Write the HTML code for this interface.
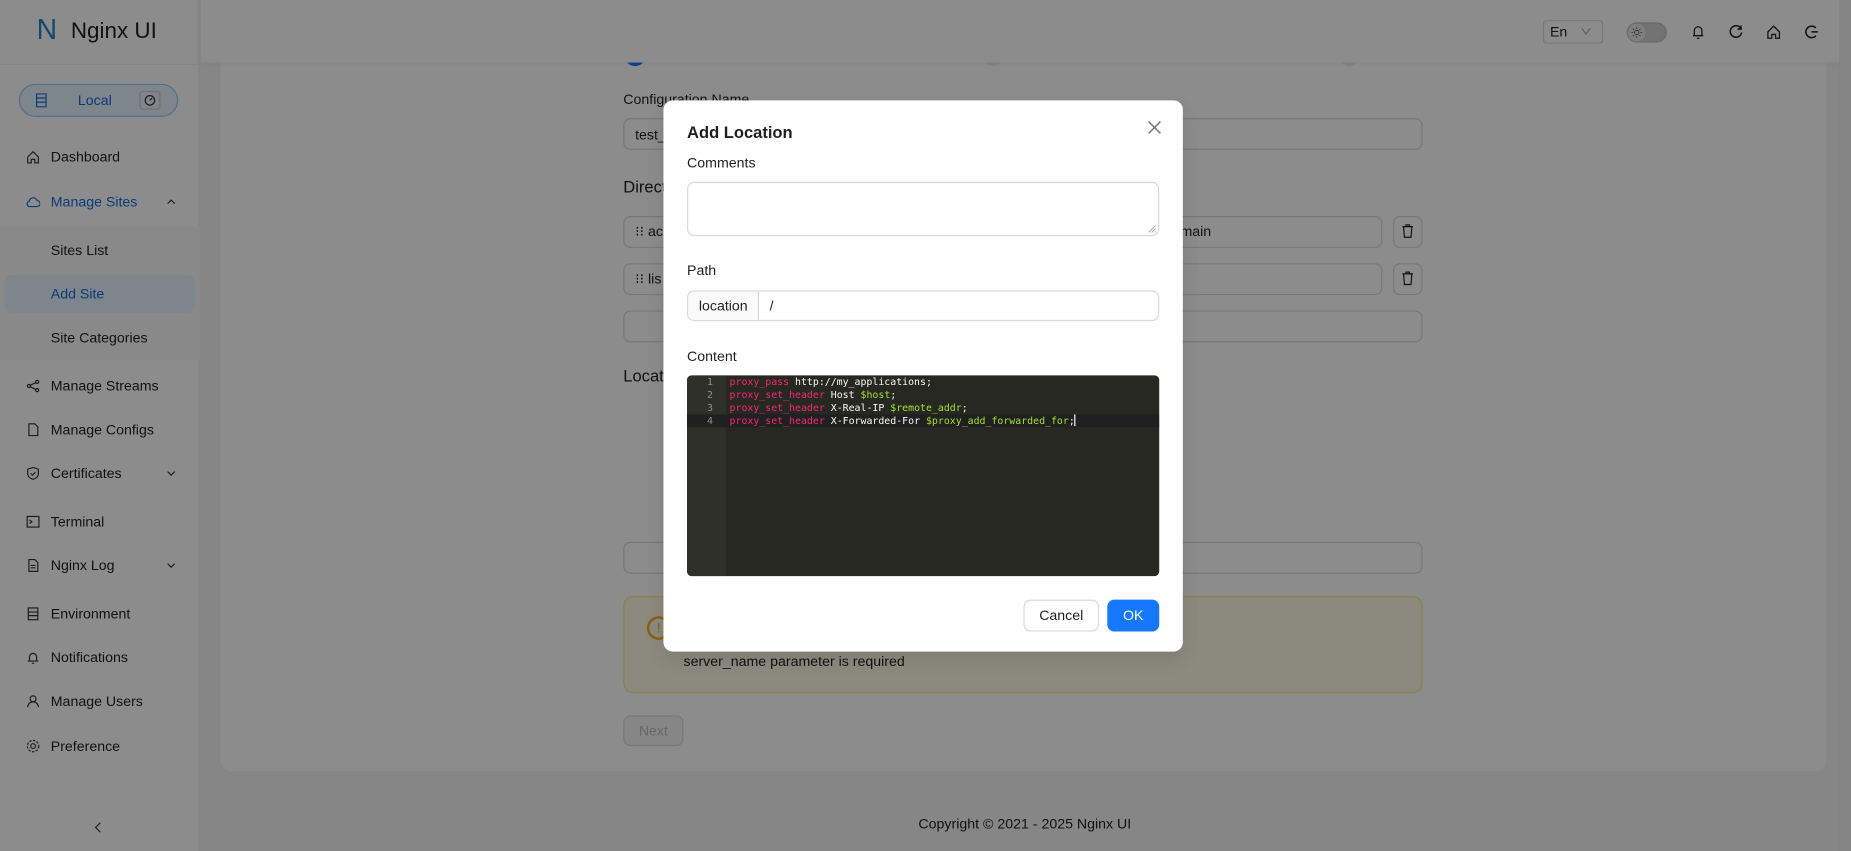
<!DOCTYPE html>
<html><head><meta charset="utf-8">
<style>
*{box-sizing:border-box;margin:0;padding:0}
html,body{width:1851px;height:851px;overflow:hidden;font-family:"Liberation Sans",sans-serif;}
#w{position:absolute;left:0;top:0;width:1568px;height:721px;transform:scale(1.18048);transform-origin:0 0;background:#f5f5f5;font-size:12px;color:rgba(0,0,0,.88)}
.a{position:absolute}
.sb{left:0;top:0;width:169px;height:721px;background:#fff;border-right:1px solid #eee}
.mi{position:absolute;left:43px;font-size:12px;color:#222;transform:translateY(-50%)}
.ic{position:absolute;left:22px;width:12px;height:12px;transform:translateY(-50%)}
.inp{position:absolute;border:1px solid #d9d9d9;border-radius:6px;background:#fff}
.lbl{position:absolute;font-size:12px;transform:translateY(-50%)}
.code{position:absolute;left:36px;font-family:"DejaVu Sans Mono","Liberation Mono",monospace;font-size:8.4px;color:#f8f8f2;white-space:pre;line-height:11px}
.k{color:#f92672}.v{color:#a6e22e}
.ln{position:absolute;left:0;width:22px;text-align:right;font-family:"DejaVu Sans Mono",monospace;font-size:8.4px;color:#8f908a;line-height:11px}
</style></head><body>
<div id="w">
<!-- card -->
<div class="a" style="left:187px;top:53px;width:1360px;height:600px;background:#fff;border-radius:0 0 8px 8px"></div>
<div class="a" style="left:529px;top:38px;width:18px;height:18px;border-radius:9px;background:#1677ff"></div>
<div class="a" style="left:832px;top:38px;width:18px;height:18px;border-radius:9px;background:#eee"></div>
<div class="a" style="left:1134px;top:38px;width:18px;height:18px;border-radius:9px;background:#eee"></div>
<!-- sidebar -->
<div class="a sb">
 <div class="a" style="left:31px;top:12px;font-size:24px;color:#1e88c8;font-weight:300">N</div>
 <div class="a" style="left:60px;top:16px;font-size:19px;color:#222">Nginx UI</div>
 <div class="a" style="left:0;top:54px;width:169px;height:1px;background:#eee"></div>
 <div class="a" style="left:16px;top:71px;width:135px;height:28px;border:1px solid #91caff;border-radius:14px;background:#e6f4ff"></div>
 <svg class="a" style="left:30px;top:79px" width="10" height="12" viewBox="0 0 10 12" fill="none" stroke="#1668dc"><rect x="1" y=".5" width="8" height="11"/><path d="M1 4h8M1 7.5h8"/></svg>
 <div class="a" style="left:66px;top:78px;color:#1668dc;font-size:12px">Local</div>
 <div class="a" style="left:118px;top:77px;width:18px;height:16px;border:1px solid #ccc;border-radius:3px;background:#eef"></div>
 <svg class="a" style="left:122px;top:80px" width="10" height="10" viewBox="0 0 10 10" fill="none" stroke="#333"><circle cx="5" cy="5" r="4"/><path d="M5 5l2-2"/></svg>
 <div class="a" style="left:0;top:192px;width:169px;height:113px;background:#fafafa"></div>
 <div class="a" style="left:4px;top:233px;width:161px;height:32px;background:#e6f4ff;border-radius:6px"></div>
 <svg class="ic" style="top:133px" viewBox="0 0 12 12" fill="none" stroke="#333"><path d="M1.5 6L6 1.5 10.5 6v5h-3V8h-3v3h-3z"/></svg>
 <div class="mi" style="top:133px">Dashboard</div>
 <svg class="ic" style="top:171px" viewBox="0 0 12 12" fill="none" stroke="#1668dc"><path d="M3 10h6.5a2.5 2.5 0 0 0 0-5 3.5 3.5 0 0 0-6.8.5A2.3 2.3 0 0 0 3 10z"/></svg>
 <div class="mi" style="top:171px;color:#1668dc">Manage Sites</div>
 <svg class="a" style="left:141px;top:168px" width="8" height="5" viewBox="0 0 8 5" fill="none" stroke="#333"><path d="M1 4.5L4 1.5 7 4.5"/></svg>
 <div class="mi" style="top:212px">Sites List</div>
 <div class="mi" style="top:249px;color:#1668dc">Add Site</div>
 <div class="mi" style="top:286px">Site Categories</div>
 <svg class="ic" style="top:327px" viewBox="0 0 12 12" fill="none" stroke="#333"><circle cx="2.5" cy="6" r="1.3"/><circle cx="9.5" cy="2.5" r="1.3"/><circle cx="9.5" cy="9.5" r="1.3"/><path d="M3.7 5.3l4.6-2.2M3.7 6.7l4.6 2.2"/></svg>
 <div class="mi" style="top:327px">Manage Streams</div>
 <svg class="ic" style="top:364px" viewBox="0 0 12 12" fill="none" stroke="#333"><path d="M2.5 1h5l2.5 2.5V11h-7.5z"/></svg>
 <div class="mi" style="top:364px">Manage Configs</div>
 <svg class="ic" style="top:401px" viewBox="0 0 12 12" fill="none" stroke="#333"><path d="M6 1l4.5 1.5v3.5C10.5 9 8 10.5 6 11 4 10.5 1.5 9 1.5 6V2.5z"/><path d="M4 6l1.5 1.5L8 5"/></svg>
 <div class="mi" style="top:401px">Certificates</div>
 <svg class="a" style="left:141px;top:399px" width="8" height="5" viewBox="0 0 8 5" fill="none" stroke="#333"><path d="M1 .5L4 3.5 7 .5"/></svg>
 <svg class="ic" style="top:442px" viewBox="0 0 12 12" fill="none" stroke="#333"><rect x="1" y="1.5" width="10" height="9"/><path d="M3 4.5l2 1.5-2 1.5"/></svg>
 <div class="mi" style="top:442px">Terminal</div>
 <svg class="ic" style="top:479px" viewBox="0 0 12 12" fill="none" stroke="#333"><path d="M2.5 1h5l2.5 2.5V11h-7.5z"/><path d="M4 6h4M4 8h4"/></svg>
 <div class="mi" style="top:479px">Nginx Log</div>
 <svg class="a" style="left:141px;top:477px" width="8" height="5" viewBox="0 0 8 5" fill="none" stroke="#333"><path d="M1 .5L4 3.5 7 .5"/></svg>
 <svg class="ic" style="top:520px" viewBox="0 0 12 12" fill="none" stroke="#333"><rect x="2" y="1" width="8" height="10"/><path d="M2 4.5h8M2 7.5h8"/></svg>
 <div class="mi" style="top:520px">Environment</div>
 <svg class="ic" style="top:557px" viewBox="0 0 12 12" fill="none" stroke="#333"><path d="M3 9V5.5a3 3 0 0 1 6 0V9h1.5H1.5zM5 10.8h2"/></svg>
 <div class="mi" style="top:557px">Notifications</div>
 <svg class="ic" style="top:594px" viewBox="0 0 12 12" fill="none" stroke="#333"><circle cx="6" cy="4" r="2.5"/><path d="M1.5 11a4.5 4.5 0 0 1 9 0"/></svg>
 <div class="mi" style="top:594px">Manage Users</div>
 <svg class="ic" style="top:632px" viewBox="0 0 12 12" fill="none" stroke="#333"><circle cx="6" cy="6" r="2"/><circle cx="6" cy="6" r="4.8" stroke-dasharray="2 1.2"/></svg>
 <div class="mi" style="top:632px">Preference</div>
 <svg class="a" style="left:80px;top:696px" width="6" height="10" viewBox="0 0 6 10" fill="none" stroke="#333"><path d="M5 1L1 5l4 4"/></svg>
</div>
<!-- header -->
<div class="a" style="left:170px;top:0;width:1398px;height:53px;background:#fff;box-shadow:0 1px 4px rgba(0,0,0,.06)"></div>
<div class="a" style="left:1307px;top:17px;width:51px;height:20px;border:1px solid #d9d9d9;border-radius:3px"></div>
<div class="a" style="left:1313px;top:20px;font-size:12px">En</div>
<svg class="a" style="left:1339px;top:23px" width="9" height="7" viewBox="0 0 9 7" fill="none" stroke="#aaa"><path d="M1 1l3.5 5L8 1"/></svg>
<div class="a" style="left:1378px;top:19px;width:34px;height:17px;border-radius:9px;background:#d0d0d0;border:1px solid #c0c0c0"></div>
<div class="a" style="left:1379px;top:20px;width:15px;height:15px;border-radius:8px;background:#e8e8e8"></div>
<svg class="a" style="left:1382px;top:23px" width="9" height="9" viewBox="0 0 10 10" fill="none" stroke="#555" stroke-width=".8"><circle cx="5" cy="5" r="2"/><path d="M5 0v1.5M5 8.5V10M0 5h1.5M8.5 5H10M1.5 1.5l1 1M7.5 7.5l1 1M1.5 8.5l1-1M7.5 2.5l1-1"/></svg>
<svg class="a" style="left:1432px;top:20px" width="13" height="14" viewBox="0 0 12 13" fill="none" stroke="#222"><path d="M3 9.5V5.5a3 3 0 0 1 6 0v4h1H2zM5 11.5h2"/></svg>
<svg class="a" style="left:1464px;top:20px" width="13" height="14" viewBox="0 0 12 12" fill="none" stroke="#222" stroke-width="1.2"><path d="M10 3.5A4.5 4.5 0 1 0 10.5 6.5"/><path d="M10 1v2.8H7.3"/></svg>
<svg class="a" style="left:1496px;top:20px" width="13" height="14" viewBox="0 0 12 12" fill="none" stroke="#222"><path d="M1.5 6L6 1.5 10.5 6v5h-3V8h-3v3h-3z"/></svg>
<svg class="a" style="left:1528px;top:20px" width="13" height="14" viewBox="0 0 12 12" fill="none" stroke="#222" stroke-width="1.2"><path d="M9.5 3A4.5 4.5 0 1 0 9.5 9"/><path d="M6 6h5"/></svg>
<div class="lbl" style="left:528px;top:84px">Configuration Name</div>
<div class="inp" style="left:528px;top:100px;width:677px;height:27px"></div>
<div class="lbl" style="left:538px;top:114px">test_</div>
<div class="lbl" style="left:528px;top:158px;font-size:14px">Directives</div>
<div class="inp" style="left:528px;top:183px;width:643px;height:27px"></div>
<div class="lbl" style="left:538px;top:196px">⁝⁝ ac</div>
<div class="lbl" style="left:1000px;top:196px">main</div>
<div class="inp" style="left:1180px;top:183px;width:25px;height:27px"></div>
<div class="inp" style="left:528px;top:223px;width:643px;height:27px"></div>
<div class="lbl" style="left:538px;top:236px">⁝⁝ lis</div>
<div class="inp" style="left:1180px;top:223px;width:25px;height:27px"></div>
<svg class="a" style="left:1187px;top:189px" width="11" height="13" viewBox="0 0 11 13" fill="none" stroke="#222"><path d="M1 3h9M4 3V1.5h3V3M2 3l.7 9h5.6L9 3"/></svg>
<svg class="a" style="left:1187px;top:229px" width="11" height="13" viewBox="0 0 11 13" fill="none" stroke="#222"><path d="M1 3h9M4 3V1.5h3V3M2 3l.7 9h5.6L9 3"/></svg>
<div class="inp" style="left:528px;top:263px;width:677px;height:27px"></div>
<div class="lbl" style="left:528px;top:318px;font-size:14px">Locations</div>
<div class="inp" style="left:528px;top:459px;width:677px;height:27px"></div>
<div class="a" style="left:528px;top:505px;width:677px;height:82px;background:#fffbe6;border:1px solid #ffe58f;border-radius:8px"></div>
<div class="a" style="left:548px;top:522px;width:20px;height:20px;border:2px solid #faad14;border-radius:10px;color:#faad14;font-size:12px;text-align:center;line-height:16px">!</div>
<div class="lbl" style="left:579px;top:560px">server_name parameter is required</div>
<div class="a" style="left:528px;top:606px;width:51px;height:26px;border:1px solid #d9d9d9;border-radius:6px;background:#f5f5f5;color:#bbb;text-align:center;line-height:24px">Next</div>
<div class="a" style="left:778px;top:691px;font-size:12px">Copyright © 2021 - 2025 Nginx UI</div>
<div class="a" style="left:1558px;top:0;width:10px;height:721px;background:#f0f0f0"></div>
<!-- overlay -->
<div class="a" style="left:0;top:0;width:1568px;height:721px;background:rgba(0,0,0,.45)"></div>
<!-- modal -->
<div class="a" style="left:562px;top:85px;width:440px;height:467px;background:#fff;border-radius:8px;box-shadow:0 6px 16px rgba(0,0,0,.1)">
 <div class="a" style="left:20px;top:19px;font-size:14px;font-weight:bold">Add Location</div>
 <svg class="a" style="left:410px;top:17px" width="12" height="12" viewBox="0 0 12 12" stroke="#777" stroke-width="1.3"><path d="M1 1l10 10M11 1L1 11"/></svg>
 <div class="lbl" style="left:20px;top:53px">Comments</div>
 <div class="inp" style="left:20px;top:69px;width:400px;height:46px"></div>
 <svg class="a" style="left:410px;top:105px" width="7" height="7" viewBox="0 0 7 7" stroke="#999" stroke-width=".7"><path d="M1 7L7 1M3.5 7L7 3.5M6 7L7 6"/></svg>
 <div class="lbl" style="left:20px;top:144px">Path</div>
 <div class="inp" style="left:20px;top:161px;width:400px;height:26px;overflow:hidden"><div class="a" style="left:0;top:0;width:60px;height:24px;background:#fafafa;border-right:1px solid #d9d9d9"></div></div>
 <div class="lbl" style="left:30px;top:174px">location</div>
 <div class="lbl" style="left:90px;top:174px">/</div>
 <div class="lbl" style="left:20px;top:217px">Content</div>
 <div class="a" style="left:20px;top:233px;width:400px;height:170px;background:#272822;border-radius:4px;overflow:hidden">
  <div class="a" style="left:0;top:0;width:33px;height:170px;background:#2f3129"></div>
  <div class="a" style="left:0;top:33px;width:400px;height:11px;background:#202020"></div>
  <div class="ln" style="top:0">1<br>2<br>3<br>4</div>
  <div class="code" style="top:0"><span class="k">proxy_pass</span> http://my_applications;
<span class="k">proxy_set_header</span> Host <span class="v">$host</span>;
<span class="k">proxy_set_header</span> X-Real-IP <span class="v">$remote_addr</span>;
<span class="k">proxy_set_header</span> X-Forwarded-For <span class="v">$proxy_add_forwarded_for</span>;<span style="border-left:1.5px solid #fff"></span></div>
 </div>
 <div class="a" style="left:305px;top:423px;width:64px;height:27px;border:1px solid #d9d9d9;border-radius:6px;text-align:center;line-height:25px">Cancel</div>
 <div class="a" style="left:376px;top:423px;width:44px;height:27px;background:#1677ff;border-radius:6px;text-align:center;line-height:27px;color:#fff">OK</div>
</div>
</div>
</body></html>
